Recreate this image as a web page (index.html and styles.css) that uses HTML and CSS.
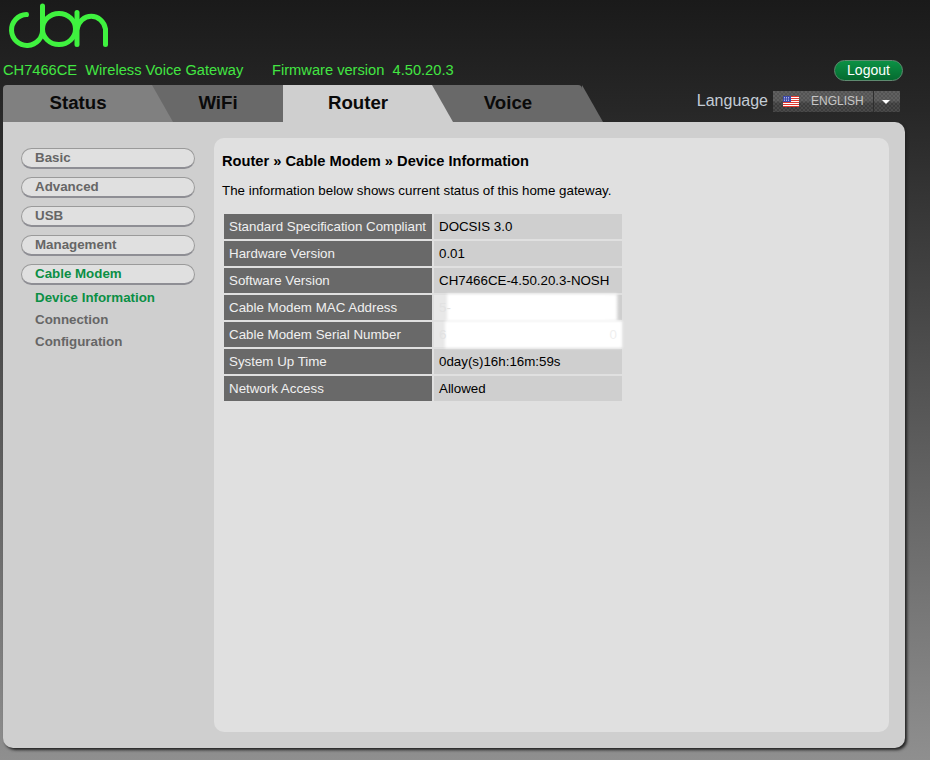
FILE: index.html
```html
<!DOCTYPE html>
<html lang="en">
<head>
<meta charset="utf-8">
<title>Device Information</title>
<link rel="stylesheet" href="styles.css">
</head>
<body>
<header class="header">
  <svg class="logo" width="120" height="55" viewBox="0 0 120 55" aria-label="cbn">
    <g fill="none" stroke="#3ff23f" stroke-width="5" stroke-linecap="round">
      <path d="M26.500 14.500 A15.500 15.500 0 1 0 42.500 29 V6"/>
      <path d="M42.500 29 A16.500 15.500 0 1 0 59 13.500 A16.500 15.500 0 0 0 42.500 29"/>
      <path d="M77 12.500 V44.500"/>
      <path d="M77 29 A14.500 15.500 0 0 1 105.500 29 V44.500"/>
    </g>
  </svg>
  <div class="info">
    <span class="model">CH7466CE&nbsp; Wireless Voice Gateway</span>
    <span class="firmware">Firmware version&nbsp; 4.50.20.3</span>
    <a class="logout">Logout</a>
  </div>
  <div class="nav">
    <div class="tabs">
      <a class="tab tab-status">Status</a>
      <a class="tab tab-wifi">WiFi</a>
      <a class="tab tab-router">Router</a>
      <a class="tab tab-voice">Voice</a>
    </div>
    <div class="lang">
      <span class="lang-label">Language</span>
      <div class="lang-select">
        <svg class="flag" width="16" height="11" viewBox="0 0 16 11">
          <rect width="16" height="11" fill="#fff"/>
          <path d="M0 .5H16M0 2.500H16M0 4.500H16M0 6.500H16M0 8.500H16M0 10.500H16" stroke="#e0392f" stroke-width="1"/>
          <rect width="8" height="6" fill="#3d49a8"/>
          <path d="M1 1.500H7M1 3H7M1 4.500H7" stroke="#dfe3f5" stroke-width=".7" stroke-dasharray="1 1"/>
        </svg>
        <span class="lang-name">ENGLISH</span>
        <span class="lang-arrow"></span>
      </div>
    </div>
  </div>
</header>
<main class="panel">
  <aside class="side">
    <a class="pill">Basic</a>
    <a class="pill">Advanced</a>
    <a class="pill">USB</a>
    <a class="pill">Management</a>
    <a class="pill on">Cable Modem</a>
    <a class="sub on">Device Information</a>
    <a class="sub">Connection</a>
    <a class="sub">Configuration</a>
  </aside>
  <section class="content">
    <h1 class="title">Router » Cable Modem » Device Information</h1>
    <p class="desc">The information below shows current status of this home gateway.</p>
    <table class="data">
      <tr><th>Standard Specification Compliant</th><td>DOCSIS 3.0</td></tr>
      <tr><th>Hardware Version</th><td>0.01</td></tr>
      <tr><th>Software Version</th><td>CH7466CE-4.50.20.3-NOSH</td></tr>
      <tr><th>Cable Modem MAC Address</th><td class="hidden hidden-mac"><i class="blur blur-mac"></i><span class="faint">5-</span></td></tr>
      <tr><th>Cable Modem Serial Number</th><td class="hidden hidden-sn"><i class="blur blur-sn"></i><span class="faint">6</span><span class="faint end">0</span></td></tr>
      <tr><th>System Up Time</th><td>0day(s)16h:16m:59s</td></tr>
      <tr><th>Network Access</th><td>Allowed</td></tr>
    </table>
  </section>
</main>
</body>
</html>
```
FILE: styles.css
```css
* { box-sizing: border-box; }
html, body { margin: 0; height: 760px; overflow: hidden; }
body {
  font-family: "Liberation Sans", Arial, sans-serif;
  background: linear-gradient(#1a1a1a 0, #272727 110px, #8f8f8f 760px);
}
.header { height: 122px; }
.logo { display: block; }
.info {
  display: flex;
  align-items: center;
  height: 30px;
  padding: 0 27px 0 3px;
  color: #42e642;
  font-size: 14.67px;
}
.model { width: 269px; }
.firmware { flex: 1; }
.logout {
  width: 69px;
  height: 21px;
  border: 1px solid #5f8a70;
  border-radius: 11px;
  background: linear-gradient(#0c9145, #056b30);
  color: #fff;
  font-size: 14px;
  line-height: 19px;
  text-align: center;
}
.nav { display: flex; height: 37px; padding-left: 3px; }
.tabs { display: flex; }
.tab {
  position: relative;
  display: block;
  height: 37px;
  padding-left: 1px;
  color: #0a0a0a;
  font-size: 18.67px;
  font-weight: bold;
  line-height: 36px;
  text-align: center;
}
.tab::after {
  content: "";
  position: absolute;
  top: 0;
  left: 100%;
  width: 21px;
  height: 37px;
  background: inherit;
  clip-path: polygon(0 0, 100% 100%, 0 100%);
  z-index: 1;
}
.tab-status { width: 149px; background: #808080; border-radius: 4px 0 0 0; }
.tab-wifi { width: 131px; background: #696969; }
.tab-wifi::after { display: none; }
.tab-router { width: 149px; background: #cfcfcf; }
.tab-voice { width: 150px; padding-left: 2px; background: #696969; border-radius: 0 4px 0 0; }
.lang {
  display: flex;
  align-items: flex-start;
  margin-left: auto;
  padding-right: 30px;
}
.lang-label {
  margin: 6px 5px 0 0;
  color: #c3ccd6;
  font-size: 16px;
  line-height: 19px;
}
.lang-select {
  display: flex;
  align-items: center;
  width: 127px;
  height: 21px;
  margin-top: 6px;
  padding-left: 10px;
  background:
    linear-gradient(rgba(255, 255, 255, .12) 0 45%, transparent 60%),
    repeating-conic-gradient(#3c3c3c 0 25%, #4a4a4a 0 50%) 0 0 / 4px 4px;
}
.flag { display: block; flex: none; }
.lang-name {
  width: 63px;
  margin-left: 12px;
  color: #c6c6c6;
  font-size: 12px;
  border-right: 1px solid #2e2e2e;
  line-height: 21px;
}
.lang-arrow {
  width: 0;
  height: 0;
  margin-left: 8px;
  border-top: 4px solid #fff;
  border-left: 4px solid transparent;
  border-right: 4px solid transparent;
}
.panel {
  display: flex;
  width: 902px;
  height: 626px;
  margin-left: 3px;
  padding: 16px 16px 16px 18px;
  background: #cfcfcf;
  border-radius: 0 10px 10px 10px;
  box-shadow: 2px 2px 3px #222;
}
.side {
  display: flex;
  flex-direction: column;
  width: 174px;
  margin-right: 19px;
  padding-top: 10px;
}
.pill {
  height: 21px;
  margin-bottom: 8px;
  padding-left: 13px;
  border: 1px solid #9a9a9a;
  border-bottom: 2px solid #8e8e94;
  border-radius: 11px;
  background: #e0e0e0;
  color: #666;
  font-size: 13.33px;
  font-weight: bold;
  line-height: 17px;
}
.sub {
  height: 22px;
  padding-left: 14px;
  color: #666;
  font-size: 13.33px;
  font-weight: bold;
  line-height: 22px;
}
.pill.on, .sub.on { color: #0b8f45; }
.pill.on { margin-bottom: 2px; }
.content {
  width: 675px;
  padding: 15px 8px;
  background: #e0e0e0;
  border-radius: 10px;
}
.title {
  margin: 0;
  color: #000;
  font-size: 14.67px;
  font-weight: bold;
  line-height: 17px;
}
.desc {
  margin: 13px 0 14px;
  color: #000;
  font-size: 13.33px;
  line-height: 15px;
}
.data {
  border-collapse: separate;
  border-spacing: 2px;
  font-size: 13.33px;
}
.data th, .data td { height: 25px; padding: 0 5px; }
.data th {
  width: 208px;
  background: #696969;
  color: #f0f0f0;
  font-weight: normal;
  text-align: left;
}
.data td {
  width: 188px;
  background: #cfcfcf;
  color: #000;
}
.data td.hidden-mac { background: linear-gradient(to right, #e8e8e8 0 170px, #cfcfcf 186px); }
.data td.hidden-sn { background: #e8e8e8; }
.hidden { position: relative; }
.faint { position: relative; color: #e2e2e2; }
.end { position: absolute; right: 5px; top: 5px; color: #efefef; }
.blur {
  position: absolute;
  top: -1px;
  height: 27px;
  background: #fff;
  filter: blur(1.5px);
}
.blur-mac { left: 13px; right: 5px; }
.blur-sn { left: 11px; right: 0; }
```
